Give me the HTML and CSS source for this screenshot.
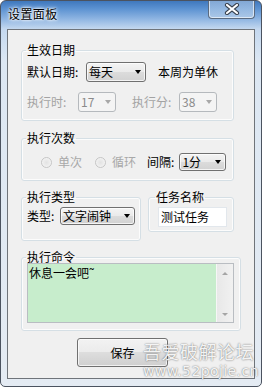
FILE: index.html
```html
<!DOCTYPE html>
<html lang="zh-CN">
<head>
    <meta charset="UTF-8">
    <title>设置面板</title>
    <link rel="stylesheet" href="styles.css">
</head>
<body>
    <div class="ventana">
        <div class="barra-titulo">
            <span class="titulo">设置面板</span>
            <div class="cerrar">
                <svg width="16" height="12" viewBox="0 0 16 12">
                    <path d="M3 2 L13 10 M13 2 L3 10" stroke="#3a4350" stroke-width="4.2" stroke-linecap="round"/>
                    <path d="M3 2 L13 10 M13 2 L3 10" stroke="#ffffff" stroke-width="2.2" stroke-linecap="round"/>
                </svg>
            </div>
        </div>

        <div class="cliente">
            <fieldset class="grupo grupo-fecha">
                <legend>生效日期</legend>
                <div class="fila">
                    <span class="etiqueta" style="width:59px">默认日期:</span>
                    <div class="combo combo-dia"><span>每天</span></div>
                    <span class="nota">本周为单休</span>
                </div>
                <div class="fila fila-hora deshabilitado">
                    <span class="etiqueta" style="width:51px">执行时:</span>
                    <div class="combo combo-num"><span>17</span></div>
                    <span class="etiqueta etiqueta-min" style="width:47px">执行分:</span>
                    <div class="combo combo-num"><span>38</span></div>
                </div>
            </fieldset>

            <fieldset class="grupo grupo-veces">
                <legend>执行次数</legend>
                <div class="fila fila-corta">
                    <span class="radio radio-uno"></span>
                    <span class="texto-gris">单次</span>
                    <span class="radio radio-dos"></span>
                    <span class="texto-gris">循环</span>
                    <span class="etiqueta etiqueta-intervalo">间隔:</span>
                    <div class="combo combo-intervalo"><span>1分</span></div>
                </div>
            </fieldset>

            <div class="fila-grupos">
                <fieldset class="grupo grupo-tipo">
                    <legend>执行类型</legend>
                    <div class="fila fila-corta">
                        <span class="etiqueta" style="width:33px">类型:</span>
                        <div class="combo combo-tipo"><span>文字闹钟</span></div>
                    </div>
                </fieldset>
                <fieldset class="grupo grupo-nombre">
                    <legend>任务名称</legend>
                    <div class="caja-texto">测试任务</div>
                </fieldset>
            </div>

            <fieldset class="grupo grupo-comando">
                <legend>执行命令</legend>
                <div class="area-texto">
                    <div class="area-contenido">休息一会吧˜</div>
                    <div class="scroll">
                        <span class="flecha-arriba"></span>
                        <span class="flecha-abajo"></span>
                    </div>
                </div>
            </fieldset>

            <div class="acciones">
                <button class="boton">保存</button>
            </div>
        </div>

        <div class="marca">
            <div class="marca-cn">吾爱破解论坛</div>
            <div class="marca-url">www.52pojie.cn</div>
        </div>
    </div>
</body>
</html>
```

FILE: styles.css
```css
body {
    margin: 0;
    font-family: "Noto Sans CJK SC", "Noto Sans", sans-serif;
    font-size: 12px;
    line-height: 14px;
    color: #000;
}
.ventana {
    width: 262px;
    height: 387px;
    box-sizing: border-box;
    border: 1px solid #4b5360;
    border-radius: 6px 6px 5px 5px;
    background: linear-gradient(to bottom, #3f78bd 0, #5d93d2 8px, #8fb5e2 18px, #c4d8ef 28px, #dce7f3 60px, #e4ebf3 100%);
    position: relative;
    overflow: hidden;
}
.barra-titulo {
    height: 28px;
    display: flex;
    align-items: flex-start;
}
.titulo {
    margin: 6px 0 0 7px;
    letter-spacing: 0.4px;
    text-shadow: 0 0 5px #fff, 0 0 3px #fff, 0 0 2px #fff;
}
.cerrar {
    margin: -1px 6px 0 auto;
    width: 47px;
    height: 19px;
    box-sizing: border-box;
    border: 1px solid #5b6b80;
    border-top: none;
    border-radius: 0 0 4px 4px;
    background: linear-gradient(to bottom, rgba(255,255,255,0.35), rgba(210,225,240,0.45));
    box-shadow: inset 0 0 0 1px rgba(255,255,255,0.6);
    display: flex;
    align-items: center;
    justify-content: center;
}
.cliente {
    margin: 0 6px;
    height: 350px;
    box-sizing: border-box;
    border: 1px solid #6f747a;
    background: #f0f0f0;
    padding: 13px 0 0 13px;
}
.grupo {
    margin: 0;
    min-width: 0;
    box-sizing: border-box;
    border: 1px solid #d5dfe5;
    border-radius: 3px;
    box-shadow: inset 0 0 0 1px #fcfcfc;
}
.grupo legend {
    padding: 0 1px;
    margin-left: -1px;
    line-height: 14px;
}
.grupo-fecha {
    width: 213px;
    padding: 5px 5px 8px 5px;
}
.grupo-veces {
    width: 213px;
    margin-top: 10px;
    padding: 8px 5px 9px 5px;
}
.fila-grupos {
    display: flex;
    align-items: flex-start;
    gap: 7px;
    margin-top: 9px;
}
.grupo-tipo {
    width: 120px;
    padding: 3px 5px 15px 5px;
}
.grupo-nombre {
    width: 86px;
    padding: 3px 5px 4px 9px;
}
.grupo-nombre legend {
    margin-left: -3px;
}
.grupo-comando {
    width: 220px;
    margin-top: 9px;
    padding: 0 6px 7px 5px;
}
.fila {
    display: flex;
    align-items: center;
    height: 20px;
}
.fila-hora {
    margin-top: 10px;
}
.fila-corta {
    height: 18px;
}
.etiqueta {
    white-space: nowrap;
}
.etiqueta-min {
    margin-left: 16px;
}
.nota {
    margin-left: 12px;
}
.deshabilitado .etiqueta {
    color: #a3a3a3;
}
.combo {
    box-sizing: border-box;
    height: 20px;
    border: 1px solid #707070;
    border-radius: 3px;
    background: linear-gradient(to bottom, #f4f4f4 0, #eaeaea 50%, #dcdcdc 50%, #d2d2d2 100%);
    box-shadow: inset 0 0 0 1px rgba(255,255,255,0.75);
    display: flex;
    align-items: center;
    padding-left: 2px;
}
.combo::after {
    content: "";
    margin-left: auto;
    margin-right: 4px;
    border-top: 4px solid #000;
    border-left: 3.5px solid transparent;
    border-right: 3.5px solid transparent;
}
.combo-dia {
    width: 60px;
}
.combo-num {
    width: 38px;
    border-color: #b5b9bd;
    background: #f4f4f4;
    box-shadow: none;
    color: #8a8a8a;
}
.combo-num::after {
    border-top-color: #a8a8a8;
}
.combo-intervalo {
    width: 47px;
    height: 18px;
    margin-left: 5px;
}
.combo-tipo {
    width: 75px;
    height: 18px;
}
.radio {
    width: 11px;
    height: 11px;
    box-sizing: border-box;
    border-radius: 50%;
    border: 1px solid #c6c6c6;
    background: radial-gradient(circle, #e3e3e3 0, #ececec 3px, #f6f6f6 5px);
}
.radio-uno {
    margin-left: 14px;
}
.radio-dos {
    margin-left: 13px;
}
.texto-gris {
    color: #a8a8a8;
    margin-left: 6px;
}
.etiqueta-intervalo {
    margin-left: 11px;
}
.caja-texto {
    width: 69px;
    height: 20px;
    box-sizing: border-box;
    border: 1px solid #e2e7ec;
    background: #fff;
    padding: 2px 0 0 2px;
}
.area-texto {
    margin-top: -1px;
    height: 60px;
    box-sizing: border-box;
    border: 1px solid #b9bdc2;
    display: flex;
}
.area-contenido {
    flex: 1;
    background: #c7edcc;
    padding: 2px 0 0 1px;
}
.scroll {
    width: 17px;
    background: linear-gradient(to right, #e8e8e8, #f1f1f1);
    border-left: 1px solid #f6f6f6;
    display: flex;
    flex-direction: column;
    align-items: center;
    justify-content: space-between;
    padding: 8px 0 6px;
    box-sizing: border-box;
}
.flecha-arriba {
    border-bottom: 3px solid #a5a5a5;
    border-left: 3.5px solid transparent;
    border-right: 3.5px solid transparent;
}
.flecha-abajo {
    border-top: 3px solid #a5a5a5;
    border-left: 3.5px solid transparent;
    border-right: 3.5px solid transparent;
}
.acciones {
    margin-top: 7px;
    padding-left: 56px;
}
.boton {
    width: 91px;
    height: 29px;
    border: 1px solid #707070;
    border-radius: 3px;
    background: linear-gradient(to bottom, #f2f2f2 0, #ebebeb 50%, #dddddd 50%, #cfcfcf 100%);
    box-shadow: inset 0 0 0 1px rgba(255,255,255,0.7);
    font-family: inherit;
    font-size: 12px;
    padding: 0;
    color: #000;
}
.marca {
    position: absolute;
    left: 142px;
    top: 339px;
    color: rgba(255,255,255,0.92);
    text-shadow: 0 0 2px rgba(0,0,0,0.45), 0 0 1px rgba(0,0,0,0.25);
    pointer-events: none;
}
.marca-cn {
    font-size: 18px;
    line-height: 22px;
    letter-spacing: 0.5px;
}
.marca-url {
    font-family: "DejaVu Sans", sans-serif;
    font-size: 14px;
    line-height: 18px;
    letter-spacing: 0.4px;
}
```
